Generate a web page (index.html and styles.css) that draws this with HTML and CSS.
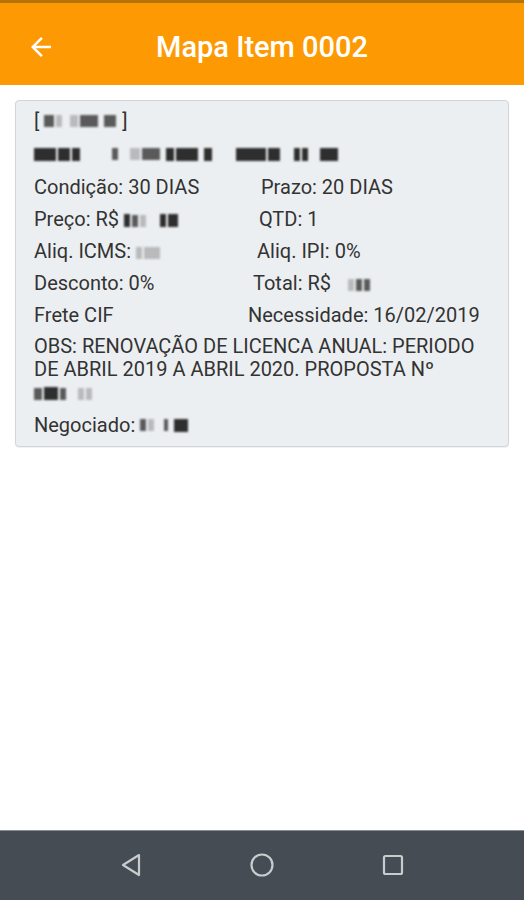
FILE: index.html
```html
<!DOCTYPE html>
<html lang="pt">
  <head>
    <meta charset="UTF-8" />
    <meta name="viewport" content="width=device-width, initial-scale=1.0" />
    <title>Mapa Item 0002</title>
    <link rel="stylesheet" href="styles.css">
  </head>
  <body>
    <div class="status-strip"></div>
    <!-- Toolbar -->
    <header class="toolbar">
      <svg class="back" width="30" height="30" viewBox="0 0 24 24">
        <path d="M20 11H7.83l5.59-5.59L12 4l-8 8 8 8 1.41-1.41L7.83 13H20v-2z" fill="#fff" />
      </svg>
      <h1>Mapa Item 0002</h1>
    </header>

    <main class="content">
      <div class="card">
        <div class="line">[ <span class="redact w10"></span><span class="redact w6 soft"></span><span class="gap w6"></span><span class="redact w8 soft"></span><span class="redact w18"></span><span class="gap w4"></span><span class="redact w12"></span><span class="gap w4"></span>]</div>
        <div class="line code">
          <span class="redact w22 dark"></span><span class="redact w12 dark"></span><span class="redact w8 dark"></span><span class="gap w30"></span><span class="redact w6"></span><span class="gap w10"></span><span class="redact w10 soft"></span><span class="redact w18"></span><span class="gap w4"></span><span class="redact w8 dark"></span><span class="redact w22 dark"></span><span class="gap w4"></span><span class="redact w8 dark"></span><span class="gap w22"></span><span class="redact w30 dark"></span><span class="redact w12 dark"></span><span class="gap w12"></span><span class="redact w6 dark"></span><span class="redact w6 dark"></span><span class="gap w10"></span><span class="redact w18 dark"></span>
        </div>

        <div class="row">
          <span class="cell">Condição: 30 DIAS</span>
          <span class="cell r1">Prazo: 20 DIAS</span>
        </div>
        <div class="row">
          <span class="cell">Preço: R$ <span class="redact w6 dark"></span><span class="redact w6"></span><span class="redact w6 soft"></span><span class="gap w12"></span><span class="redact w6 dark"></span><span class="redact w10 dark"></span></span>
          <span class="cell r2">QTD: 1</span>
        </div>
        <div class="row">
          <span class="cell">Aliq. ICMS: <span class="redact w6 soft"></span><span class="redact w16 soft"></span></span>
          <span class="cell r3">Aliq. IPI: 0%</span>
        </div>
        <div class="row">
          <span class="cell">Desconto: 0%</span>
          <span class="cell r4">Total: R$ <span class="gap w12"></span><span class="redact w6 soft"></span><span class="redact w6"></span><span class="redact w6"></span></span>
        </div>
        <div class="row">
          <span class="cell">Frete CIF</span>
          <span class="cell r5">Necessidade: 16/02/2019</span>
        </div>

        <p class="obs">OBS: RENOVAÇÃO DE LICENCA ANUAL: PERIODO DE ABRIL 2019 A ABRIL 2020. PROPOSTA Nº<br><span class="redact w8"></span><span class="redact w14 dark"></span><span class="redact w6"></span><span class="gap w10"></span><span class="redact w6 soft"></span><span class="redact w6 soft"></span></p>

        <div class="line last">Negociado: <span class="redact w6"></span><span class="redact w6 soft"></span><span class="gap w8"></span><span class="redact w4"></span><span class="gap w4"></span><span class="redact w14 dark"></span></div>
      </div>
    </main>

    <!-- Android navigation -->
    <nav class="navbar">
      <svg width="24" height="26" viewBox="0 0 24 26">
        <path d="M20 3 L4 13 L20 23 Z" fill="none" stroke="#c9cbcd" stroke-width="2.2" stroke-linejoin="round" />
      </svg>
      <svg width="26" height="26" viewBox="0 0 26 26">
        <circle cx="13" cy="13" r="10.5" fill="none" stroke="#c9cbcd" stroke-width="2.2" />
      </svg>
      <svg width="24" height="24" viewBox="0 0 24 24">
        <rect x="3" y="3" width="18" height="18" rx="1.5" fill="none" stroke="#c9cbcd" stroke-width="2.2" />
      </svg>
    </nav>
  </body>
</html>
```

FILE: styles.css
```css
html,
body {
  height: 100%;
}

body {
  margin: 0;
  display: flex;
  flex-direction: column;
  background: #fff;
  font-family: Roboto, "Liberation Sans", sans-serif;
  color: #333;
}

.status-strip {
  height: 3px;
  background: #b67406;
}

.toolbar {
  height: 82px;
  box-sizing: border-box;
  padding: 5px 0 0 26px;
  background: #fd9a03;
  display: flex;
  align-items: center;
}

.toolbar h1 {
  flex: 1;
  margin: 0 0 0 -56px;
  text-align: center;
  color: #fff;
  font-size: 29px;
  font-weight: 500;
}

.content {
  flex: 1;
  padding: 15px;
}

.card {
  background: #eceff1;
  border: 1px solid #d2d5d8;
  border-radius: 4px;
  padding: 4px 18px 5px;
  font-size: 20px;
  box-shadow: 0 1px 1px rgba(0, 0, 0, 0.06);
}

.line,
.row {
  height: 32px;
  display: flex;
  align-items: center;
  white-space: pre;
}

.code {
  height: 34px;
}

.last {
  margin-top: 5px;
}

.cell {
  display: inline-block;
  white-space: pre;
}

.row .cell:first-child {
  width: 224px;
  flex: none;
}

.r1 { margin-left: 3px; }
.r2 { margin-left: 1px; }
.r3 { margin-left: -1px; }
.r4 { margin-left: -5px; }
.r5 { margin-left: -10px; }

.obs {
  margin: 4px 0 0;
  line-height: 23px;
}

/* blurred / redacted data */
.redact {
  display: inline-block;
  height: 12px;
  background: #5a5a5a;
  filter: blur(0.9px);
  margin-right: 2px;
  vertical-align: middle;
}

.redact.dark {
  background: #2e2e2e;
  height: 13px;
}

.redact.soft {
  background: #b8babb;
}

.gap {
  display: inline-block;
}

.w4 { width: 4px; }
.w6 { width: 6px; }
.w8 { width: 8px; }
.w10 { width: 10px; }
.w12 { width: 12px; }
.w14 { width: 14px; }
.w16 { width: 16px; }
.w18 { width: 18px; }
.w22 { width: 22px; }
.w30 { width: 30px; }

.navbar {
  height: 68px;
  background: #464c54;
  border-top: 1px solid #8a8e93;
  display: flex;
  align-items: center;
  justify-content: center;
  gap: 106px;
  padding-bottom: 1px;
}
```
